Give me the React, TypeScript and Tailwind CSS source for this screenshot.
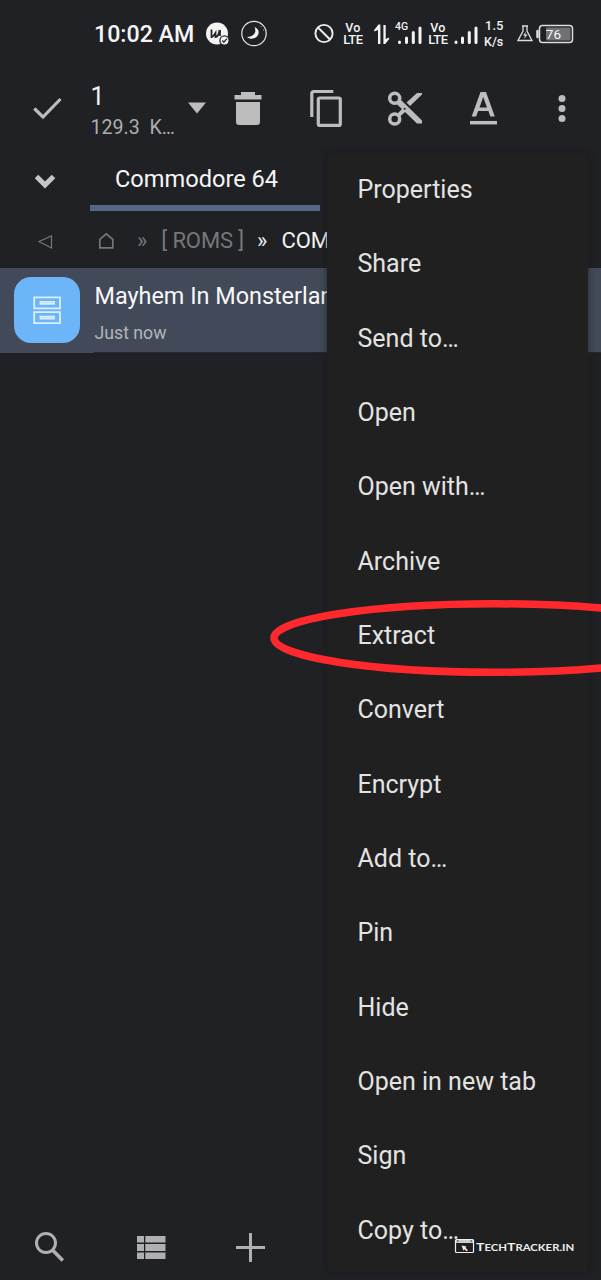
import React from 'react';

type IconProps = { box: string; className: string; children: React.ReactNode };

function Icon({ box, className, children }: IconProps) {
  return (
    <svg viewBox={box} className={`shrink-0 ${className}`} fill="none" aria-hidden="true">
      {children}
    </svg>
  );
}

function VoLte() {
  return (
    <div className="flex w-[22px] shrink-0 flex-col items-center font-medium text-[#f4f4f4]">
      <span className="text-[12.500px] leading-[12px] tracking-[0.300px]">Vo</span>
      <span className="text-[13px] leading-[12px] tracking-[-0.400px]">LTE</span>
    </div>
  );
}

function StatusBar() {
  return (
    <header className="flex h-[68px] shrink-0 items-center pl-[94px] text-[#f4f4f4]">
      <span className="w-[112px] shrink-0 pt-px text-[23.2px] font-medium whitespace-nowrap">10:02 AM</span>
      <Icon box="206 22 24 24" className="h-6 w-6">
        <circle cx="217" cy="33.5" r="11" fill="#f4f4f4" />
        <path d="M211.500 29.500v7.500q1.500 0 4-4v4q3 0 4-7M220 30v6" stroke="#25262a" strokeWidth="1.800" />
        <circle cx="224.500" cy="40.500" r="4.600" fill="#f4f4f4" stroke="#25262a" strokeWidth="1.300" />
        <path d="m222.300 40.500 1.600 1.700 3-3.600" stroke="#25262a" strokeWidth="1.300" />
      </Icon>
      <Icon box="240 20 28 28" className="ml-2.5 h-7 w-7">
        <circle cx="254" cy="33.500" r="12.200" stroke="#e6e6e6" strokeWidth="1.200" />
        <path d="M254.500 27c2.500 5-.5 9.500-7.500 10 3 2.800 8 2.300 10.500-1.200s1-7.300-3-8.800Z" fill="#f4f4f4" />
        <path d="M261 26v1M263.500 29.500v1" stroke="#aaa" />
      </Icon>
      <Icon box="313 22 22 24" className="ml-[45px] h-6 w-[22px]">
        <circle cx="324" cy="33.500" r="8.600" stroke="#eee" strokeWidth="1.900" />
        <path d="m318 27.500 12 12" stroke="#eee" strokeWidth="1.900" />
      </Icon>
      <div className="ml-[7px]"><VoLte /></div>
      <Icon box="373 22 17 24" className="ml-[9px] h-6 w-[17px]">
        <path d="M378 44V30l-3.800 1.500v-1.500l4.300-5.500h1.900V44ZM383.400 25h2.300v14l3.500-1.500v1.500l-4 5h-1.800Z" fill="#f4f4f4" />
      </Icon>
      <div className="ml-[5px] grid w-[27px] shrink-0">
        <span className="col-start-1 row-start-1 self-start text-[10.5px] leading-[11px] font-medium">4G</span>
        <Icon box="395 20 28 27" className="col-start-1 row-start-1 h-[27px] w-7">
          <path d="M399.500 41v.5M406.500 37v4.500M413.300 31.500v10M420 27v14.500" stroke="#f4f4f4" strokeWidth="3" strokeLinecap="round" />
        </Icon>
      </div>
      <div className="ml-[5px]"><VoLte /></div>
      <Icon box="454 20 26 27" className="ml-[4px] h-[27px] w-[26px]">
        <path d="M457 41v.5M463.500 37v4.500M470.300 31.500v10M477 27v14.500" stroke="#f4f4f4" strokeWidth="3" strokeLinecap="round" />
      </Icon>
      <div className="ml-[4px] flex w-[22px] shrink-0 flex-col text-[12.5px] leading-[16px] font-medium">
        <span className="pl-0.5 tracking-[0.300px]">1.5</span>
        <span className="pl-px">K/s</span>
      </div>
      <Icon box="518 23 58 22" className="ml-[12px] h-[22px] w-[58px]">
        <path d="M523 26h6M524 26v5l-5 9.500h14l-5-9.500v-5" stroke="#ddd" strokeWidth="1.300" />
        <path d="m527 31.500-3 4h2l-1 3.500 3.700-4.500h-2.500Z" fill="#ddd" />
        <path d="M538.500 31v6" stroke="#ddd" strokeWidth="2.500" strokeLinecap="round" />
        <rect x="540.500" y="25.500" width="33" height="17" rx="3" stroke="#ddd" strokeWidth="1.500" />
        <rect x="547" y="27.500" width="24.500" height="13" rx="1" fill="#707175" />
        <text x="546.800" y="38.800" fontSize="13.500" fill="#f8f8f8">76</text>
      </Icon>
    </header>
  );
}

function Toolbar() {
  return (
    <div className="flex h-[82px] shrink-0 items-center text-[#bdbdbd]">
      <Icon box="30 94 34 30" className="ml-[30px] h-[30px] w-[34px]">
        <path d="m34.300 108.500 8.700 8.500 17.500-18" stroke="currentColor" strokeWidth="3.200" />
      </Icon>
      <div className="ml-[26.500px] flex w-[90px] shrink-0 flex-col pt-1">
        <span className="text-[25px] leading-[34px] text-[#f1f1f1]">1</span>
        <span className="text-[19.6px] leading-[28px] whitespace-pre text-[#adadad]">129.3  K…</span>
      </div>
      <Icon box="186 99 22 20" className="ml-[5.500px] h-5 w-[22px]">
        <path d="M188 102.500h18l-9 11Z" fill="currentColor" />
      </Icon>
      <Icon box="232 89 32 40" className="ml-6 h-10 w-8">
        <path d="M241 92h14v3h6.500v4.500h-27V95h6.500Z" fill="currentColor" />
        <path d="M236 102h24v20q0 3-3 3h-18q-3 0-3-3Z" fill="currentColor" />
      </Icon>
      <Icon box="308 88 36 42" className="ml-11 h-[42px] w-9">
        <path d="M311.800 117V93.500q0-2 2-2h19.500" stroke="currentColor" strokeWidth="3.200" />
        <rect x="318.300" y="98" width="22" height="27.400" rx="1.500" stroke="currentColor" strokeWidth="3.200" />
      </Icon>
      <Icon box="386 89 38 40" className="ml-[42px] h-10 w-[38px]">
        <circle cx="394.700" cy="98.300" r="5" stroke="currentColor" strokeWidth="3.500" />
        <circle cx="394.700" cy="119" r="5" stroke="currentColor" strokeWidth="3.500" />
        <path d="m398 101.500 2.500-2 21.500 21v3h-5l-12-11.500-6 5.500-2.500-3 5.500-5.500-6-5.500Z" fill="currentColor" />
        <path d="m406.500 102.500 10.500-9.500h5v1.500l-12 11.500Z" fill="currentColor" />
        <circle cx="404.700" cy="108.800" r="1" fill="#202125" />
      </Icon>
      <Icon box="468 89 32 40" className="ml-11 h-10 w-8">
        <path fillRule="evenodd" d="M480.500 92h5.500l8.800 24.500h-4.500l-1.900-5.500h-10.300l-1.900 5.500h-4.500Zm2.700 5-3.700 10.500h7.500Z" fill="currentColor" />
        <path d="M470 122.700h27" stroke="currentColor" strokeWidth="3.500" />
      </Icon>
      <Icon box="556 91 12 36" className="ml-14 h-9 w-3">
        <circle cx="562" cy="98.500" r="3.500" fill="currentColor" />
        <circle cx="562" cy="108.500" r="3.500" fill="currentColor" />
        <circle cx="562" cy="118.500" r="3.500" fill="currentColor" />
      </Icon>
    </div>
  );
}

function TabRow() {
  return (
    <div className="flex h-[61px] shrink-0">
      <Icon box="30 170 30 22" className="mt-5 ml-[30px] h-[22px] w-[30px]">
        <path d="m36.500 176.500 8.500 8.500 8.500-8.500" stroke="#c5c5c5" strokeWidth="5" />
      </Icon>
      <div className="ml-[30px] w-[230px] border-b-[6px] border-[#536789] pt-3 pl-[25px]">
        <span className="text-[23.6px] leading-[34px] whitespace-nowrap text-[#f6f6f6]">Commodore 64</span>
      </div>
    </div>
  );
}

function Breadcrumb() {
  return (
    <nav className="flex h-[57px] shrink-0 items-center pt-[2px] text-[22px] leading-[26px] whitespace-nowrap text-[#76777a]">
      <Icon box="36 230 20 22" className="ml-9 h-[22px] w-5">
        <path d="M51.500 236v12l-12.500-6.500Z" stroke="currentColor" strokeWidth="1.200" />
      </Icon>
      <Icon box="96 229 20 24" className="ml-10 h-6 w-5">
        <path d="M99.800 247.800v-8.500l6.500-5.500 6.500 5.500v8.500Z" stroke="currentColor" strokeWidth="1.700" />
      </Icon>
      <span className="ml-[21px]">»</span>
      <span className="ml-[14px] tracking-[-0.1px]">[ ROMS ]</span>
      <span className="ml-[13px] text-[#f2f2f2]">»</span>
      <span className="ml-[14px] w-[46px] overflow-hidden text-[#f2f2f2]">COM</span>
    </nav>
  );
}

function FileRow() {
  return (
    <div className="flex h-[85px] shrink-0 items-start bg-[#424a59] pl-3.5">
      <div className="mt-[9px] flex h-[66px] w-[66px] shrink-0 items-center justify-center rounded-[17px] bg-[#6bb5f8]">
        <Icon box="32 295 30 30" className="h-[30px] w-[30px]">
          <path d="M34.200 297.300h25.800v11h-25.800ZM34.200 312.200h25.800v11h-25.800ZM40.500 301.800h13.500v2h-13.500ZM40.500 316.700h13.500v2h-13.500Z" stroke="#dceeff" strokeWidth="1.800" />
        </Icon>
      </div>
      <div className="ml-3.5 flex h-full flex-1 flex-col border-b border-[#25282d] pl-[0.500px] whitespace-nowrap">
        <span className="pt-[11px] text-[23.4px] leading-[34px] text-[#f8f8f8]">Mayhem In Monsterland</span>
        <span className="mt-[7px] text-[17.700px] leading-[26px] text-[#b2b5ba]">Just now</span>
      </div>
    </div>
  );
}

const actions = [
  'Properties', 'Share', 'Send to…', 'Open', 'Open with…', 'Archive', 'Extract', 'Convert',
  'Encrypt', 'Add to…', 'Pin', 'Hide', 'Open in new tab', 'Sign', 'Copy to…',
];

function ActionMenu() {
  return (
    <ul className="absolute top-[153px] left-[327px] h-[1119px] w-[261px] overflow-hidden rounded-sm bg-[#202020] shadow-[0_0_7px_rgba(20,20,22,0.6)]">
      {actions.map((label) => (
        <li key={label} className="flex h-[74.33px] items-center pb-[0.500px] pl-[30.500px] text-[25px] whitespace-nowrap text-[#e3e3e3]">
          {label}
        </li>
      ))}
    </ul>
  );
}

function BottomBar() {
  return (
    <footer className="mt-auto flex h-[66px] shrink-0 items-center text-[#b0b0b1]">
      <Icon box="32 1230 34 34" className="ml-8 h-[34px] w-[34px]">
        <circle cx="46" cy="1243" r="9.500" stroke="currentColor" strokeWidth="3" />
        <path d="m52.500 1250 10.300 10.500" stroke="currentColor" strokeWidth="3.600" />
      </Icon>
      <Icon box="135 1230 32 34" className="ml-[69px] h-[34px] w-8">
        <path d="M137 1236h7v6.500h-7ZM145.300 1236H165.500v6.500H145.300ZM137 1244h7v7h-7ZM145.300 1244H165.500v7H145.300ZM137 1252.500h7v6.500h-7ZM145.300 1252.500H165.500v6.500H145.300Z" fill="currentColor" />
      </Icon>
      <Icon box="234 1230 34 34" className="ml-[67px] h-[34px] w-[34px]">
        <path d="M236 1247.500h29M250.500 1233v29" stroke="currentColor" strokeWidth="3" />
      </Icon>
    </footer>
  );
}

function Watermark() {
  return (
    <div className="absolute top-[1237px] left-[454px] flex h-[18px] items-center text-[#eee]">
      <Icon box="454 1237 22 18" className="h-[18px] w-[22px]">
        <rect x="455.500" y="1239.500" width="18" height="13" rx="1" stroke="currentColor" strokeWidth="1.200" />
        <path d="M456 1240h17v3h-17Z" fill="#ccc" />
        <path d="M457 1241h1.500M470.500 1241h1.500" stroke="#222" />
        <path d="m461.500 1245.500 5 1-1 1.300 2.500 2.500-1.500 1-2-2-1 1.500Z" fill="currentColor" />
      </Icon>
      <span className="origin-left scale-x-[1.17] pt-0.5 font-[Lato,sans-serif] text-[12px] leading-none font-bold whitespace-nowrap">
        T<span className="text-[9.7px]">ECH</span>T<span className="text-[9.7px]">RACKER.IN</span>
      </span>
    </div>
  );
}

export default function App() {
  return (
    <main className="relative flex h-[1280px] w-[601px] flex-col overflow-hidden bg-[#202125] font-[Roboto,sans-serif]">
      <StatusBar />
      <Toolbar />
      <TabRow />
      <Breadcrumb />
      <FileRow />
      <BottomBar />
      <ActionMenu />
      <Watermark />
      <svg viewBox="260 590 341 96" className="pointer-events-none absolute top-[590px] left-[260px] h-24 w-[341px]" fill="none">
        <ellipse cx="494" cy="638" rx="220" ry="34.200" stroke="#ff292d" strokeWidth="7.500" />
      </svg>
    </main>
  );
}
